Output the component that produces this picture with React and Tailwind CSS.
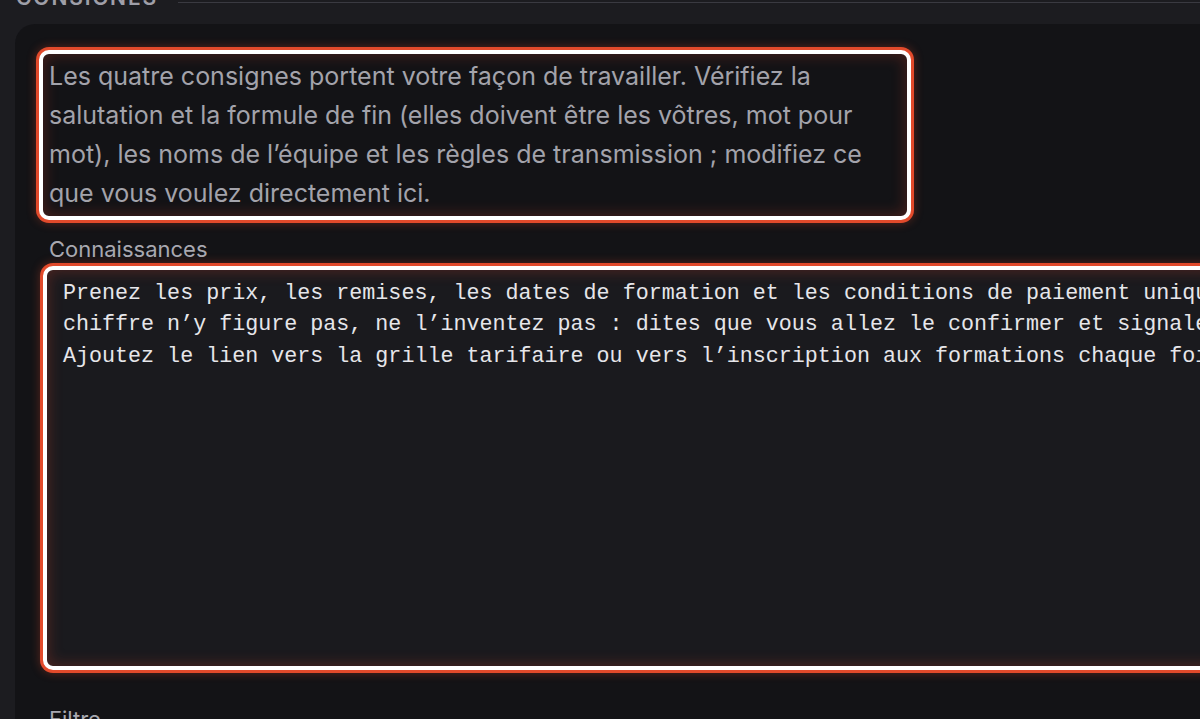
import React from "react";

const sans = { fontFamily: "Inter, 'Noto Sans', sans-serif" };
const mono = { fontFamily: "'Liberation Mono', 'DejaVu Sans Mono', monospace" };

// annotation ring: orange outer, white border, reddish inner glow
const highlight =
  "border-4 border-white shadow-[0_0_0_3px_#e24a2b,0_0_10px_3px_rgba(226,74,43,0.35),inset_0_0_14px_2px_rgba(200,60,40,0.28)]";

const knowledge = [
  "Prenez les prix, les remises, les dates de formation et les conditions de paiement uniquement dans le document joint. Si un",
  "chiffre n’y figure pas, ne l’inventez pas : dites que vous allez le confirmer et signalez-le à l’équipe commerciale.",
  "Ajoutez le lien vers la grille tarifaire ou vers l’inscription aux formations chaque fois que c’est utile.",
];

export default function App() {
  return (
    <div className="h-[719px] w-[1200px] overflow-hidden bg-[#1c1c20]" style={sans}>
      <div className="mt-[-18px] flex items-center gap-5 pl-4">
        <span className="text-[21px] font-semibold uppercase tracking-[0.09em] text-[#9f9fa8]">
          Consignes
        </span>
        <div className="mt-[9px] h-px flex-1 bg-[#3a3a41]" />
      </div>

      <div className="ml-[15px] mt-[10px] h-[800px] rounded-tl-[20px] bg-[#131316] pl-6 pt-[26px]">
        <p
          className={`w-[872px] rounded-[10px] bg-[#131316] px-[6px] pb-[3px] pt-[3px] text-[25px] leading-[39px] text-[#a3a3ab] ${highlight}`}
        >
          Les quatre consignes portent votre façon de travailler. Vérifiez la
          salutation et la formule de fin (elles doivent être les vôtres, mot
          pour mot), les noms de l’équipe et les règles de transmission ;
          modifiez ce que vous voulez directement ici.
        </p>

        <label className="mt-[15px] block pl-[10px] text-[22px] leading-[28px] text-[#a8a8b0]">
          Connaissances
        </label>
        <div
          className={`ml-1 mt-[3px] h-[404px] w-[1300px] rounded-[10px] bg-[#1a1a1e] px-4 pt-[8px] text-[21.7px] leading-[31.5px] text-[#e6e6ea] ${highlight}`}
          style={mono}
        >
          {knowledge.map((line) => (
            <div key={line} className="whitespace-pre">
              {line}
            </div>
          ))}
        </div>

        <label className="mt-[35px] block pl-[10px] text-[22px] leading-[28px] text-[#a8a8b0]">
          Filtre
        </label>
      </div>
    </div>
  );
}
